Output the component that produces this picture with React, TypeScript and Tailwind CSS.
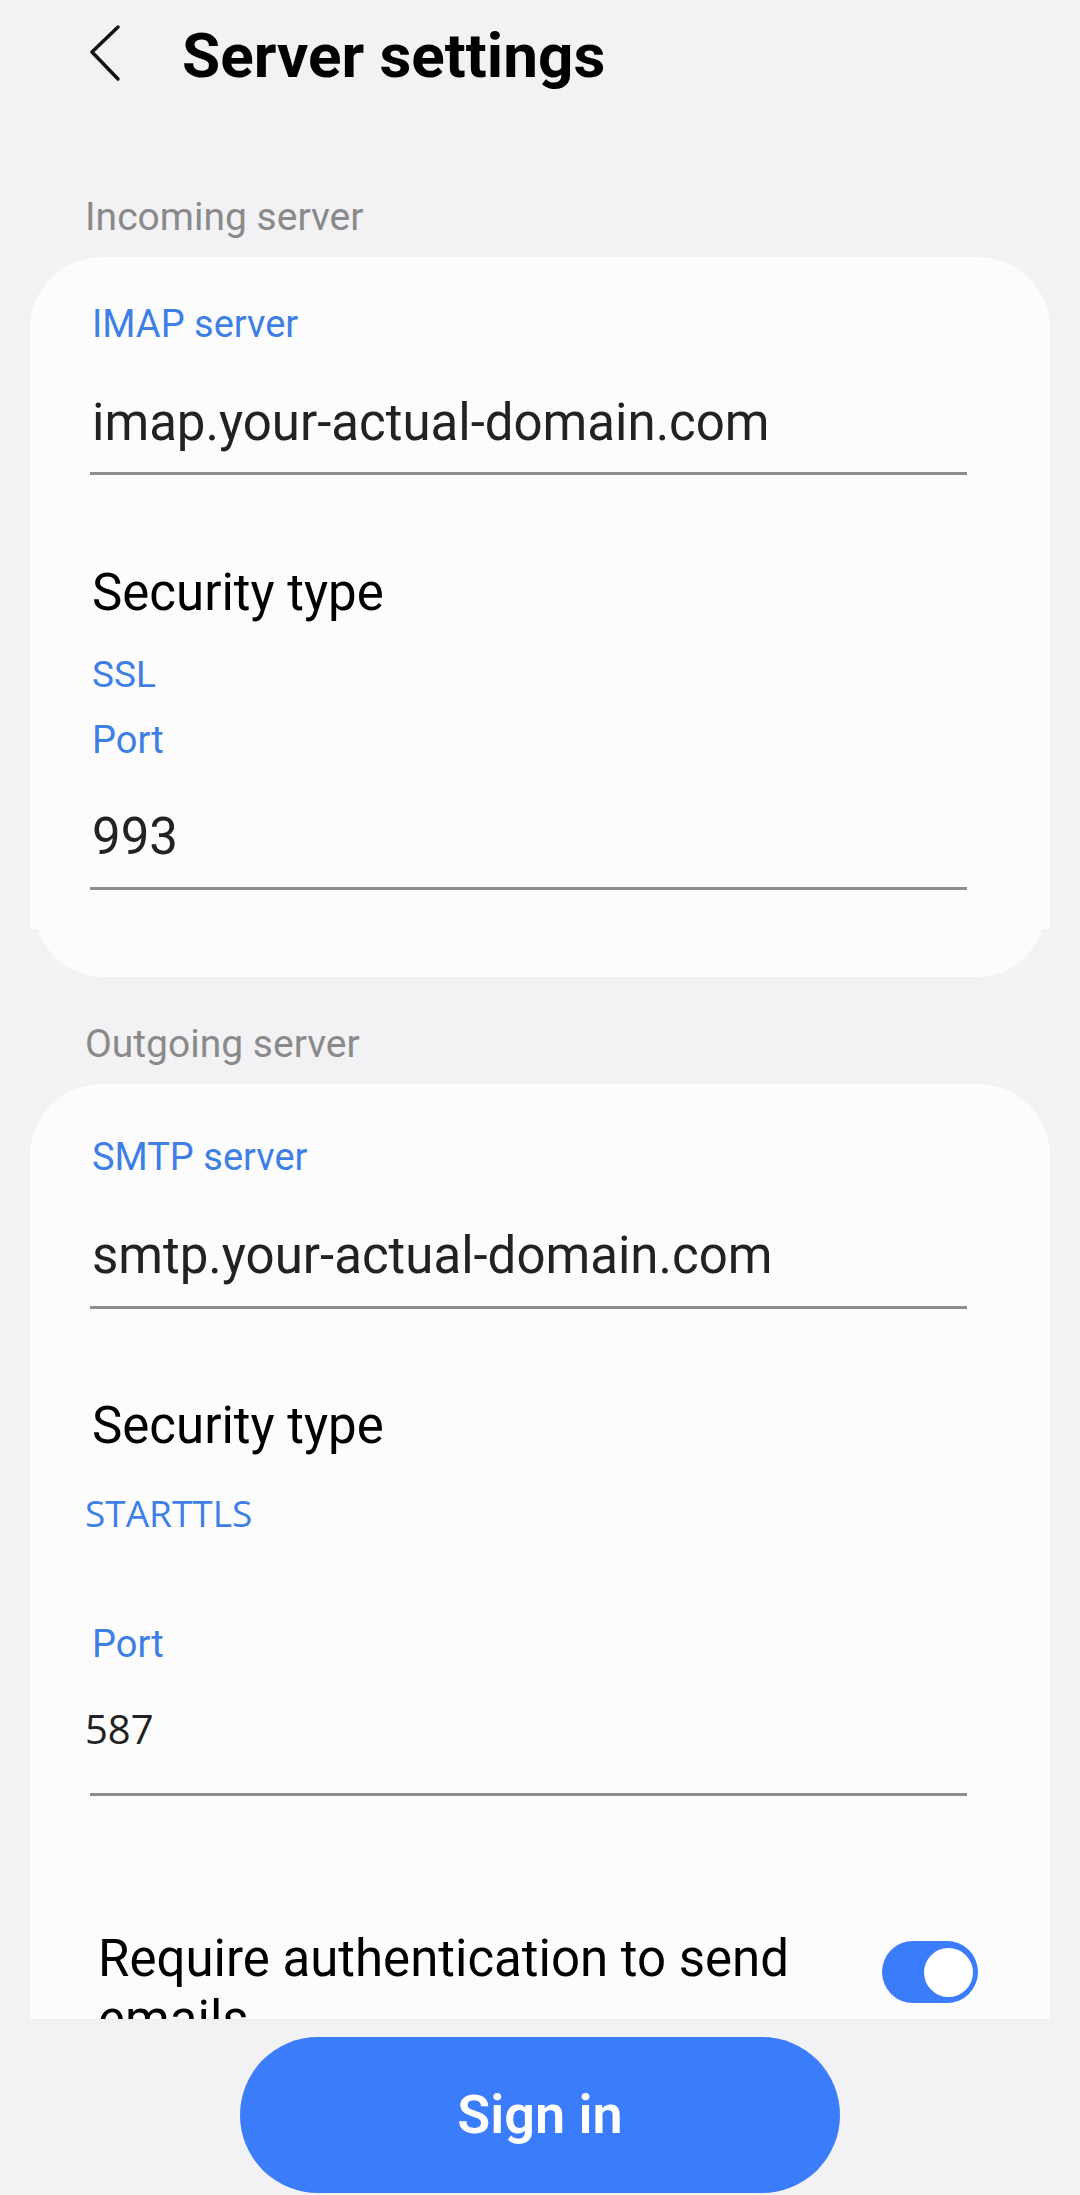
const ROBOTO = { fontFamily: 'Roboto, "Liberation Sans", sans-serif' };
const OPEN = { fontFamily: '"Open Sans", "Liberation Sans", sans-serif' };

function Label({ text, className = '' }: { text: string; className?: string }) {
  return (
    <div className={`pl-[2px] text-[38px] leading-none text-[#3e7fe6] ${className}`}>{text}</div>
  );
}

function Value({ text, className = '' }: { text: string; className?: string }) {
  return (
    <div className={`pl-[2px] text-[51px] leading-none text-[#222222] ${className}`}>{text}</div>
  );
}

function Underline({ className = '' }: { className?: string }) {
  return <div className={`h-[3px] bg-[#8e8e8e] ${className}`} />;
}

export default function App() {
  return (
    <div className="w-[1080px] h-[2195px] bg-[#f2f2f4] flex flex-col overflow-hidden" style={ROBOTO}>
      <div className="h-[2019px] overflow-hidden">
        {/* header */}
        <div className="flex items-start pl-[80px] pt-[20px]">
          <svg width="50" height="70" viewBox="0 0 50 70" fill="none">
            <polyline
              points="38,7 12,32 38,59"
              stroke="#111"
              strokeWidth="3.5"
              strokeLinecap="round"
              strokeLinejoin="round"
            />
          </svg>
          <h1 className="ml-[52px] mt-[5px] text-[62px] leading-none font-bold text-black">Server settings</h1>
        </div>

        <div className="ml-[85px] mt-[108px] text-[39px] leading-none text-[#8a8a8a]">Incoming server</div>

        {/* incoming card */}
        <div className="mx-[30px] mt-[20px]">
          <div className="relative bg-[#fcfcfc] rounded-t-[72px] pl-[60px] pr-[83px] pt-[48px] pb-[39px] flex flex-col">
            <Label text="IMAP server" />
            <Value text="imap.your-actual-domain.com" className="mt-[54px]" />
            <Underline className="mt-[24px]" />
            <div className="mt-[92px] pl-[2px] text-[51px] leading-none text-black">Security type</div>
            <div className="mt-[38px] pl-[2px] text-[37px] leading-none text-[#3e7fe6]">SSL</div>
            <Label text="Port" className="mt-[28px]" />
            <Value text="993" className="mt-[52px]" />
            <Underline className="mt-[25px]" />
          </div>
          <div className="-mt-[22px] mx-[4px] h-[70px] bg-[#fcfcfc] rounded-b-[70px]" />
        </div>

        <div className="ml-[85px] mt-[48px] text-[39px] leading-none text-[#8a8a8a]">Outgoing server</div>

        {/* outgoing card */}
        <div className="mx-[30px] mt-[20px] bg-[#fcfcfc] rounded-t-[72px] pl-[60px] pr-[83px] pt-[54px] pb-[200px] flex flex-col">
          <Label text="SMTP server" />
          <Value text="smtp.your-actual-domain.com" className="mt-[54px]" />
          <Underline className="mt-[25px]" />
          <div className="mt-[91px] pl-[2px] text-[51px] leading-none text-black">Security type</div>
          <div className="mt-[43px] -ml-[5px] text-[37px] leading-none text-[#3e7fe6]" style={OPEN}>
            STARTTLS
          </div>
          <Label text="Port" className="mt-[94px]" />
          <div className="mt-[46px] -ml-[5px] text-[40px] leading-none text-[#222222]" style={OPEN}>
            587
          </div>
          <Underline className="mt-[44px]" />
          <div className="mt-[132px] ml-[8px] w-[880px] flex items-start justify-between">
            <div className="w-[740px] text-[51px] leading-[61px] text-black">
              Require authentication to send emails
            </div>
            <div className="mt-[13px] w-[96px] h-[62px] rounded-full bg-[#3b7cfb] flex items-center justify-end pr-[5px]">
              <div className="w-[49px] h-[49px] rounded-full bg-white" />
            </div>
          </div>
        </div>
      </div>

      {/* bottom bar */}
      <div className="flex-1 flex justify-center pt-[18px]">
        <button className="w-[600px] h-[156px] rounded-full bg-[#3b7cfb] text-white text-[54px] font-semibold leading-none">
          Sign in
        </button>
      </div>
    </div>
  );
}
